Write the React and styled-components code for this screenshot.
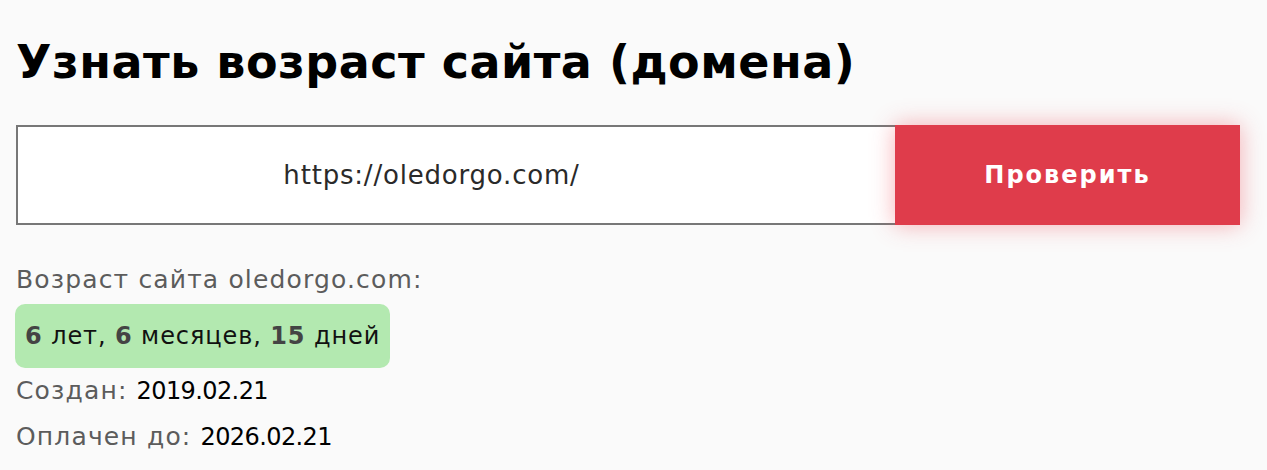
import React, { useState } from 'react'
import styled, { createGlobalStyle } from 'styled-components'

const Global = createGlobalStyle`
  html, body {
    margin: 0;
    padding: 0;
    background: #fafafa;
  }
  body {
    font-family: "DejaVu Sans", "Noto Sans", sans-serif;
  }
  * { box-sizing: border-box; }
`

const Page = styled.div`
  padding: 36px 27px 0 16px;
`

const Title = styled.h1`
  margin: 0;
  font-size: 46px;
  font-weight: 700;
  color: #000;
  line-height: 52px;
  letter-spacing: 0.5px;
`

const Form = styled.form`
  display: flex;
  margin-top: 37px;
  height: 100px;
`

const Input = styled.input`
  flex: 1;
  height: 100%;
  border: 2px solid #777;
  border-right: none;
  background: #fff;
  font-family: inherit;
  font-size: 26px;
  font-weight: 400;
  letter-spacing: 0.8px;
  color: #2a2a2a;
  text-align: center;
  padding: 0 50px 0 0;
  outline: none;
`

const Button = styled.button`
  width: 345px;
  height: 100%;
  border: none;
  background: #df3c4b;
  color: #fff;
  font-family: inherit;
  font-size: 24px;
  font-weight: 700;
  letter-spacing: 2px;
  box-shadow: 0 0 22px rgba(240, 80, 90, 0.45);
  cursor: pointer;
`

const Result = styled.div`
  margin-top: 32px;
  display: flex;
  flex-direction: column;
  align-items: flex-start;
`

const Line = styled.div`
  font-size: 25px;
  line-height: 46px;
  letter-spacing: 1.15px;
  color: #5c5c5c;
  font-weight: 400;
`

const Value = styled.span`
  color: #000;
  font-size: 24px;
  letter-spacing: -0.6px;
`

const Age = styled.div`
  background: #b3e9b0;
  border-radius: 10px;
  padding: 0 10px;
  height: 64px;
  display: flex;
  align-items: center;
  font-size: 24px;
  letter-spacing: 0.9px;
  color: #111;
  margin: 1px 0 0 -1px;
`

const Num = styled.b`
  color: #444;
  font-weight: 700;
`

export default function App() {
  const [url, setUrl] = useState('https://oledorgo.com/')
  return (
    <Page>
      <Global />
      <Title>Узнать возраст сайта (домена)</Title>
      <Form onSubmit={(e) => e.preventDefault()}>
        <Input value={url} onChange={(e) => setUrl(e.target.value)} />
        <Button type="submit">Проверить</Button>
      </Form>
      <Result>
        <Line>Возраст сайта oledorgo.com:</Line>
        <Age>
          <Num>6</Num>&nbsp;лет,&nbsp;<Num>6</Num>&nbsp;месяцев,&nbsp;<Num>15</Num>&nbsp;дней
        </Age>
        <Line>Создан: <Value>2019.02.21</Value></Line>
        <Line>Оплачен до: <Value>2026.02.21</Value></Line>
      </Result>
    </Page>
  )
}
